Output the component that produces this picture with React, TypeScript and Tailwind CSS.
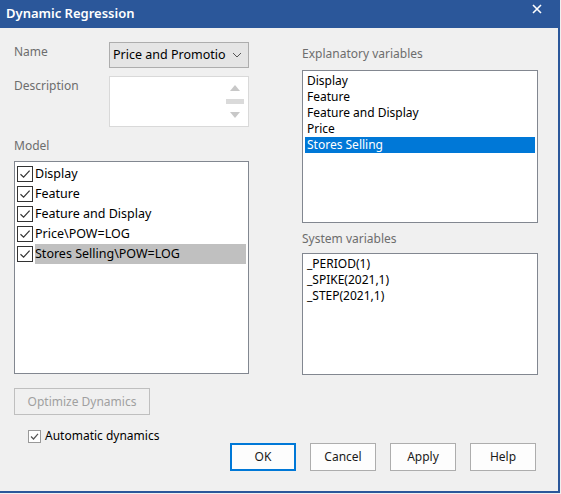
import React from "react";

const modelItems = ["Display", "Feature", "Feature and Display", "Price\\POW=LOG", "Stores Selling\\POW=LOG"];
const explanatory = ["Display", "Feature", "Feature and Display", "Price", "Stores Selling"];
const systemVars = ["_PERIOD(1)", "_SPIKE(2021,1)", "_STEP(2021,1)"];

function Check() {
  return (
    <svg width="12" height="12" viewBox="0 0 12 12">
      <path d="M1.5 6.2 L4.6 9.2 L10.6 2.6" fill="none" stroke="#333" strokeWidth="1.2" />
    </svg>
  );
}

function DlgButton({ label, primary }: { label: string; primary?: boolean }) {
  return (
    <button
      className={
        "w-[66px] h-[28px] bg-[#fdfdfd] text-[12px] text-[#1a1a1a] flex items-center justify-center " +
        (primary ? "border-2 border-[#0078d7]" : "border border-[#adadad]")
      }
    >
      {label}
    </button>
  );
}

export default function App() {
  return (
    <div className="w-[561px] h-[494px] bg-[#f0f0f0] font-['Noto_Sans','Liberation_Sans',sans-serif] text-[12px] text-black overflow-hidden">
      <div className="w-[560px] h-[493px] border-r-2 border-b-2 border-[#2b579a] flex flex-col">
        {/* title bar */}
        <div className="h-[28px] bg-[#2b579a] flex items-center justify-between pl-[6px] pr-[16px] shrink-0">
          <span className="text-white text-[13px] font-semibold">Dynamic Regression</span>
          <svg width="10" height="10" viewBox="0 0 10 10" className="-mt-[10px]">
            <path d="M1 1 L9 9 M9 1 L1 9" stroke="white" strokeWidth="1.6" />
          </svg>
        </div>

        <div className="flex pl-[14px] pt-[14px]">
          {/* left column */}
          <div className="w-[235px] flex flex-col">
            <div className="flex">
              <span className="w-[95px] text-[#6d6d6d] pt-[1px]">Name</span>
              <div className="w-[140px] h-[26px] bg-[#e5e5e5] border border-[#adadad] flex items-center justify-between pl-[3px] pr-[6px]">
                <span className="text-[12.5px] whitespace-nowrap overflow-hidden">Price and Promotio</span>
                <svg width="10" height="6" viewBox="0 0 10 6">
                  <path d="M1 1 L5 5 L9 1" fill="none" stroke="#555" strokeWidth="1" />
                </svg>
              </div>
            </div>
            <div className="flex mt-[8px]">
              <span className="w-[95px] text-[#6d6d6d] pt-[1px]">Description</span>
              <div className="w-[140px] h-[51px] bg-white border border-[#d9d9d9] flex justify-end pr-[4px]">
                <div className="w-[18px] flex flex-col items-center justify-between py-[8px]">
                  <svg width="10" height="6" viewBox="0 0 10 6"><path d="M0 6 L5 0 L10 6Z" fill="#c8c8c8" /></svg>
                  <div className="w-[18px] h-[5px] bg-[#dadada]" />
                  <svg width="10" height="6" viewBox="0 0 10 6"><path d="M0 0 L5 6 L10 0Z" fill="#c8c8c8" /></svg>
                </div>
              </div>
            </div>
            <span className="text-[#6d6d6d] mt-[10px]">Model</span>
            <div className="mt-[6px] h-[213px] bg-white border border-[#828790] pt-[2px] pl-[2px] pr-[2px]">
              {modelItems.map((m, i) => (
                <div key={m} className="h-[20px] flex items-center">
                  <div className="w-[16px] h-[16px] border border-[#333] flex items-center justify-center shrink-0">
                    <Check />
                  </div>
                  <span
                    className={
                      "ml-[2px] h-[20px] flex items-center flex-1 text-[12.5px] " +
                      (i === modelItems.length - 1 ? "bg-[#c0c0c0]" : "")
                    }
                  >
                    {m}
                  </span>
                </div>
              ))}
            </div>
          </div>

          {/* right column */}
          <div className="w-[236px] ml-[53px] flex flex-col">
            <span className="text-[#6d6d6d] mt-[3px]">Explanatory variables</span>
            <div className="mt-[7px] h-[153px] bg-white border border-[#828790] pt-[2px] px-[2px] leading-[16px]">
              {explanatory.map((e, i) => (
                <div key={e} className={"h-[16px] pl-[2px] " + (i === 4 ? "bg-[#0078d7] text-white" : "")}>
                  {e}
                </div>
              ))}
            </div>
            <span className="text-[#6d6d6d] mt-[7px]">System variables</span>
            <div className="mt-[5px] h-[122px] bg-white border border-[#828790] pt-[2px] px-[4px] leading-[16px]">
              {systemVars.map((s) => (
                <div key={s} className="h-[16px]">{s}</div>
              ))}
            </div>
          </div>
        </div>

        {/* bottom */}
        <div className="pl-[14px] mt-[13px]">
          <button className="w-[136px] h-[27px] border border-[#bfbfbf] bg-[#f0f0f0] text-[#a0a0a0] text-[12px]">
            Optimize Dynamics
          </button>
        </div>
        <div className="flex pl-[28px] pr-[22px]">
          <div className="flex items-center mt-[14px] h-[14px]">
            <div className="w-[13px] h-[13px] border border-[#999] bg-white flex items-center justify-center">
              <svg width="9" height="9" viewBox="0 0 9 9"><path d="M1 4.5 L3.5 7 L8 1.8" fill="none" stroke="#555" strokeWidth="1.2" /></svg>
            </div>
            <span className="ml-[4px]">Automatic dynamics</span>
          </div>
          <div className="ml-auto flex gap-[14px] mt-[28px]">
            <DlgButton label="OK" primary />
            <DlgButton label="Cancel" />
            <DlgButton label="Apply" />
            <DlgButton label="Help" />
          </div>
        </div>
      </div>
    </div>
  );
}
